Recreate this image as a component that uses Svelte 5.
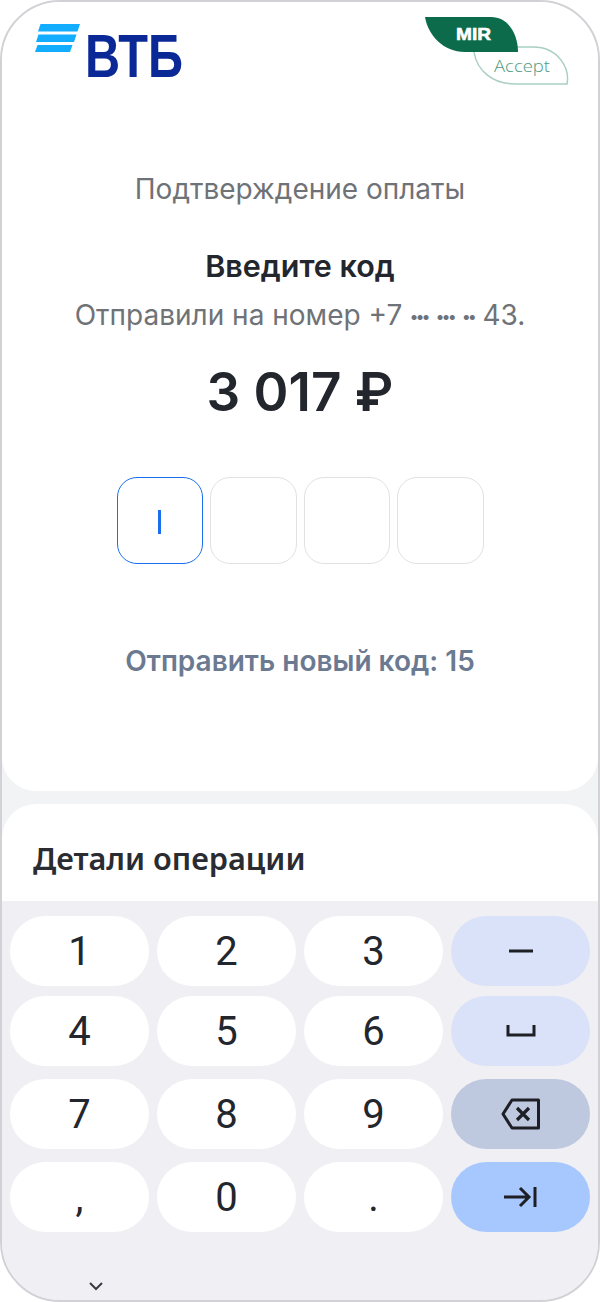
<script lang="ts">
	const cells = [true, false, false, false];

	const rows = [
		[{ label: '1' }, { label: '2' }, { label: '3' }, { icon: 'minus', kind: 'soft' }],
		[{ label: '4' }, { label: '5' }, { label: '6' }, { icon: 'space', kind: 'soft' }],
		[{ label: '7' }, { label: '8' }, { label: '9' }, { icon: 'back', kind: 'dark' }],
		[{ label: ',' }, { label: '0' }, { label: '.' }, { icon: 'next', kind: 'accent' }]
	];
</script>

<div class="phone">
	<section class="main">
		<header class="top">
			<svg class="vtb" viewBox="0 0 150 56" width="150" height="56" aria-label="ВТБ">
				<path d="M5.500 0H45L42.500 7.500H3Z" fill="#12adff" />
				<path d="M3.500 10.500H41.500L39 18H1Z" fill="#12adff" />
				<path d="M2.500 21H37.500L35 28H0Z" fill="#12adff" />
				<text x="50" y="53" class="vtb-text" textLength="98" lengthAdjust="spacingAndGlyphs">ВТБ</text>
			</svg>
			<svg class="mir" viewBox="0 0 146 70" width="146" height="70">
				<path d="M49 35C52 54 68 67 90 67H142C145 52 134 30 108 30H88" fill="none" stroke="#a8cfc0" stroke-width="1.500" />
				<path d="M0 0H66C84 0 93 18 93 35H40C18 35 3 18 0 0Z" fill="#0b6b4a" />
				<text x="31" y="23" class="mir-text" textLength="35" lengthAdjust="spacingAndGlyphs">MIR</text>
				<text x="69" y="55" class="accept-text" textLength="56" lengthAdjust="spacingAndGlyphs">Accept</text>
			</svg>
		</header>

		<p class="title">Подтверждение оплаты</p>
		<h1>Введите код</h1>
		<p class="sent">Отправили на номер +7 <span class="mask">•••</span> <span class="mask">•••</span> <span class="mask">••</span> 43.</p>
		<p class="amount">3 017 ₽</p>

		<div class="code">
			{#each cells as active}
				<div class="cell" class:active>
					{#if active}<span class="caret"></span>{/if}
				</div>
			{/each}
		</div>

		<p class="resend">Отправить новый код: 15</p>
	</section>

	<section class="details">
		<h2>Детали операции</h2>
	</section>

	<section class="keyboard">
		<div class="keys">
			{#each rows as row}
				<div class="row">
					{#each row as key}
						<div class="key {key.kind ?? ''}">
							{#if key.label}
								{key.label}
							{:else if key.icon === 'minus'}
								<svg width="26" height="26" viewBox="0 0 26 26"><path d="M1 13H25" stroke="#1d1f24" stroke-width="3" /></svg>
							{:else if key.icon === 'space'}
								<svg width="30" height="12" viewBox="0 0 30 12"><path d="M2 0V10H28V0" fill="none" stroke="#1d1f24" stroke-width="3" /></svg>
							{:else if key.icon === 'back'}
								<svg width="40" height="32" viewBox="0 0 40 32">
									<path d="M11 2H37.500V30H11L2 16Z" fill="none" stroke="#1d1f24" stroke-width="3" stroke-linejoin="round" />
									<path d="M16 10L28 22M28 10L16 22" fill="none" stroke="#1d1f24" stroke-width="3.200" />
								</svg>
							{:else if key.icon === 'next'}
								<svg width="36" height="24" viewBox="0 0 36 24">
									<path d="M1 12H26M17 3L26 12L17 21" fill="none" stroke="#1d1f24" stroke-width="3" />
									<path d="M32 2V22" fill="none" stroke="#1d1f24" stroke-width="3" />
								</svg>
							{/if}
						</div>
					{/each}
				</div>
			{/each}
		</div>
		<svg class="chevron" width="16" height="10" viewBox="0 0 16 10"><path d="M2 2L8 8L14 2" fill="none" stroke="#3a3c42" stroke-width="2" /></svg>
	</section>
</div>

<style>
	:global(body) {
		margin: 0;
		background: #fff;
	}

	.phone {
		box-sizing: border-box;
		width: 600px;
		height: 1302px;
		border: 2px solid #d2d2d6;
		border-radius: 60px;
		overflow: hidden;
		background: #f2f3f5;
		display: flex;
		flex-direction: column;
		font-family: Inter, "Noto Sans", sans-serif;
	}

	.main {
		height: 789px;
		background: #fff;
		border-radius: 0 0 34px 34px;
		text-align: center;
		flex-shrink: 0;
	}

	.top {
		display: flex;
		justify-content: space-between;
		align-items: flex-start;
		padding: 15px 27px 0 33px;
		height: 85px;
		box-sizing: border-box;
	}

	.top svg {
		display: block;
		overflow: visible;
	}

	.vtb {
		margin-top: 7px;
	}

	.vtb-text {
		font-family: "Liberation Sans", sans-serif;
		font-weight: 700;
		font-size: 61px;
		fill: #0a2896;
	}

	.mir-text {
		font-family: "Liberation Sans", sans-serif;
		font-weight: 700;
		font-size: 17px;
		fill: #fff;
		stroke: #fff;
		stroke-width: 0.6px;
	}

	.accept-text {
		font-family: "Open Sans", sans-serif;
		font-size: 17px;
		font-weight: 300;
		fill: #4e9a80;
	}

	p,
	h1,
	h2 {
		margin: 0;
	}

	.title {
		margin-top: 86px;
		font-size: 28px;
		line-height: 32px;
		color: #6f7277;
	}

	h1 {
		margin-top: 43px;
		font-size: 30.500px;
		line-height: 36px;
		font-weight: 600;
		color: #23262d;
	}

	.sent {
		margin-top: 15px;
		font-size: 28px;
		line-height: 32px;
		color: #6f7277;
	}

	.mask {
		font-size: 16px;
		font-weight: 700;
		letter-spacing: -1.500px;
		vertical-align: 3px;
	}

	.amount {
		margin-top: 26px;
		font-size: 53px;
		line-height: 68px;
		font-weight: 600;
		color: #23262d;
	}

	.code {
		display: flex;
		justify-content: center;
		gap: 7px;
		margin-top: 51px;
	}

	.cell {
		box-sizing: border-box;
		width: 86.500px;
		height: 87px;
		border: 1.600px solid #e1e1e4;
		border-radius: 20px;
		display: flex;
		align-items: center;
		justify-content: center;
	}

	.cell.active {
		border-color: #1a6ff0;
	}

	.caret {
		width: 3px;
		height: 24px;
		margin-top: 3px;
		background: #1a6ff0;
	}

	.resend {
		margin-top: 81px;
		font-size: 28px;
		line-height: 32px;
		font-weight: 600;
		color: #6b7a91;
	}

	.details {
		margin-top: 13px;
		height: 97px;
		background: #fff;
		border-radius: 34px 34px 0 0;
		flex-shrink: 0;
		box-sizing: border-box;
		padding: 35px 0 0 31px;
	}

	h2 {
		font-family: "Noto Sans", sans-serif;
		font-size: 30.700px;
		line-height: 38px;
		font-weight: 600;
		color: #2a2c32;
	}

	.keyboard {
		flex: 1;
		background: #f0eff4;
		display: flex;
		flex-direction: column;
		align-items: center;
		padding-top: 15px;
	}

	.keys {
		display: flex;
		flex-direction: column;
		gap: 13px;
	}

	.row {
		display: flex;
		gap: 8px;
	}

	.row:first-child {
		margin-bottom: -3px;
	}

	.key {
		width: 139px;
		height: 70px;
		border-radius: 35px;
		background: #fff;
		display: flex;
		align-items: center;
		justify-content: center;
		font-family: Roboto, sans-serif;
		font-size: 40px;
		color: #23262d;
	}

	.key.soft {
		background: #d9e2f8;
	}

	.key.dark {
		background: #bec8de;
	}

	.key.accent {
		background: #a6c8ff;
	}

	.chevron {
		margin-top: 49px;
		margin-left: -408px;
	}
</style>
